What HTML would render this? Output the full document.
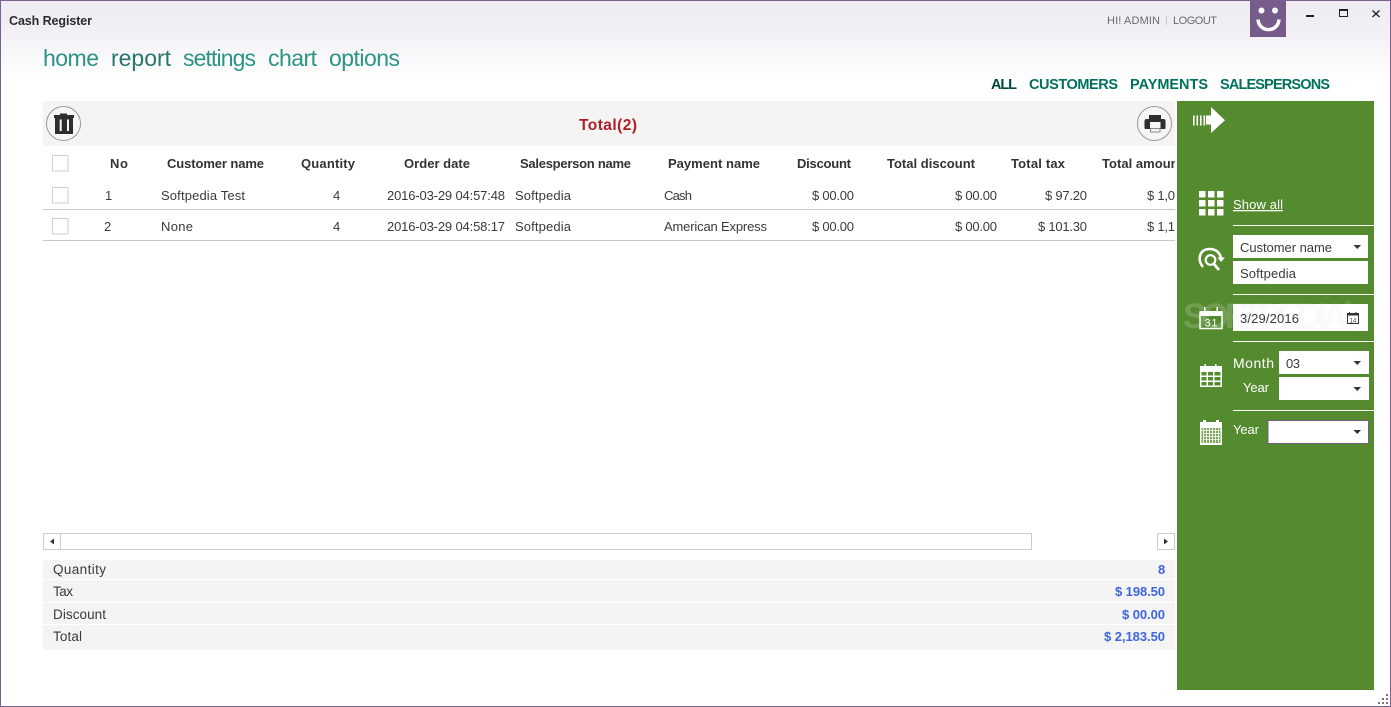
<!DOCTYPE html>
<html><head><meta charset="utf-8"><title>Cash Register</title>
<style>
html,body{margin:0;padding:0;background:#fff;overflow:hidden}
svg{display:block;position:absolute;left:0;top:0}
text{font-family:"Liberation Sans",sans-serif;font-size:13px;fill:#3a3a3a}
.h{font-weight:bold;fill:#333}
.l{font-size:13.5px}
.m{font-size:23px;fill:#2b9483}
.tab{font-size:14.5px;font-weight:bold;fill:#00705f}
.s{font-size:11px;fill:#6a6a6a}
.v{font-weight:bold;fill:#3f66dd}
.w{fill:#fff}
</style></head><body>
<svg width="1391" height="707" viewBox="0 0 1391 707" xmlns="http://www.w3.org/2000/svg">
<defs>
<linearGradient id="g" x1="0" y1="0" x2="0" y2="1"><stop offset="0" stop-color="#eeecf1"/><stop offset=".35" stop-color="#f1eff4"/><stop offset="1" stop-color="#fff"/></linearGradient>
<clipPath id="tc"><rect x="43" y="146" width="1132" height="100"/></clipPath>
<clipPath id="df"><rect x="1233" y="304" width="135" height="27"/></clipPath>
</defs>
<rect width="1391" height="707" fill="#fff"/>
<rect width="1391" height="80" fill="url(#g)"/>

<text x="9" y="25" class="h" style="fill:#2b2b2b;font-size:12.500px" textLength="83">Cash Register</text>
<text x="1107" y="24" class="s" textLength="53">HI! ADMIN</text>
<rect x="1166" y="16" width="1" height="9" fill="#ccc"/>
<text x="1173" y="24" class="s" textLength="44">LOGOUT</text>

<rect x="1250" y="0" width="36" height="37" fill="#775b8a"/>
<circle cx="1261.500" cy="10.500" r="3" fill="#fff"/><circle cx="1275" cy="10.500" r="3" fill="#fff"/>
<path d="M1258 19.500C1259 33 1278 33 1279 19.500" fill="none" stroke="#fff" stroke-width="3.500"/>

<rect x="1306" y="15" width="8" height="2" fill="#222"/>
<rect x="1339.500" y="9.500" width="8" height="7" fill="none" stroke="#222"/><rect x="1339" y="9" width="9" height="2" fill="#222"/>
<path d="M1372.500 10.500L1379.500 17M1379.500 10.500L1372.500 17" stroke="#222" stroke-width="1.300"/>

<text x="43" y="66" class="m" textLength="56">home</text>
<text x="111" y="66" class="m" textLength="60" style="fill:#25786b">report</text>
<text x="183" y="66" class="m" textLength="73">settings</text>
<text x="268" y="66" class="m" textLength="49">chart</text>
<text x="329" y="66" class="m" textLength="71">options</text>

<text x="991" y="89" class="tab" textLength="26" style="fill:#00483c">ALL</text>
<text x="1029" y="89" class="tab" textLength="89">CUSTOMERS</text>
<text x="1130" y="89" class="tab" textLength="78">PAYMENTS</text>
<text x="1220" y="89" class="tab" textLength="110">SALESPERSONS</text>

<rect x="43" y="101" width="1132" height="45" fill="#f4f4f4"/>
<circle cx="63.500" cy="123.500" r="17" fill="#f6f6f6" stroke="#999"/>
<path d="M60 113.500h7v1.500h7v3h-20v-3h6z" fill="#2e2e2e"/>
<path d="M55 118h18v16h-18zM59.700 119.500v11.500h2v-11.500zM67 119.500v11.500h2v-11.500z" fill="#2e2e2e" fill-rule="evenodd"/>
<text x="579" y="130" class="h" style="font-size:15.500px;fill:#b01e26" textLength="58">Total(2)</text>
<circle cx="1154.500" cy="123.500" r="17" fill="#f6f6f6" stroke="#999"/>
<path d="M1149 115h12v4h-12z" fill="#2e2e2e"/>
<path d="M1147 119h16.500q2 0 2 2v7q0 1-1 1h-19q-1 0-1-1v-7q0-2 2.500-2z" fill="#2e2e2e"/>
<rect x="1150" y="122" width="10.500" height="6" fill="#f6f6f6"/>
<rect x="1150.500" y="128.500" width="9.500" height="3.500" fill="#f4f4f4" stroke="#888" stroke-width="1"/>

<g fill="#fff" stroke="#cfcfcf">
<rect x="52.500" y="155.500" width="15.500" height="15.500"/>
<rect x="52.500" y="187.500" width="15.500" height="15.500"/>
<rect x="52.500" y="218.500" width="15.500" height="15.500"/>
</g>

<g clip-path="url(#tc)">
<text x="110" y="168" class="h" textLength="18">No</text>
<text x="167" y="168" class="h" textLength="97">Customer name</text>
<text x="301" y="168" class="h" textLength="54">Quantity</text>
<text x="404" y="168" class="h" textLength="66">Order date</text>
<text x="520" y="168" class="h" textLength="111">Salesperson name</text>
<text x="668" y="168" class="h" textLength="92">Payment name</text>
<text x="797" y="168" class="h" textLength="54">Discount</text>
<text x="887" y="168" class="h" textLength="88">Total discount</text>
<text x="1011" y="168" class="h" textLength="54">Total tax</text>
<text x="1102" y="168" class="h" textLength="81">Total amount</text>

<text x="105" y="200">1</text>
<text x="161" y="200" textLength="84">Softpedia Test</text>
<text x="333" y="200">4</text>
<text x="387" y="200" textLength="118">2016-03-29 04:57:48</text>
<text x="515" y="200" textLength="56">Softpedia</text>
<text x="664" y="200" textLength="28">Cash</text>
<text x="812" y="200" textLength="42">$ 00.00</text>
<text x="955" y="200" textLength="42">$ 00.00</text>
<text x="1045" y="200" textLength="42">$ 97.20</text>
<text x="1147" y="200" textLength="28">$ 1,0</text>

<text x="104" y="231">2</text>
<text x="161" y="231" textLength="32">None</text>
<text x="333" y="231">4</text>
<text x="387" y="231" textLength="118">2016-03-29 04:58:17</text>
<text x="515" y="231" textLength="56">Softpedia</text>
<text x="664" y="231" textLength="103">American Express</text>
<text x="812" y="231" textLength="42">$ 00.00</text>
<text x="955" y="231" textLength="42">$ 00.00</text>
<text x="1038" y="231" textLength="49">$ 101.30</text>
<text x="1147" y="231" textLength="28">$ 1,1</text>
</g>
<rect x="43" y="209" width="1132" height="1" fill="#c8c8c8"/>
<rect x="43" y="240" width="1132" height="1" fill="#c8c8c8"/>

<rect x="43.500" y="533.500" width="988" height="16" fill="#fff" stroke="#ccc"/>
<rect x="60" y="534" width="1" height="15" fill="#ccc"/>
<path d="M50 541.500l4-3v6z" fill="#333"/>
<rect x="1157.500" y="533.500" width="17" height="16" fill="#fff" stroke="#ccc"/>
<path d="M1168 541.500l-4-3v6z" fill="#333"/>

<path d="M47 560H1175V579H43V564q0-4 4-4z" fill="#f4f4f4"/>
<rect x="43" y="580" width="1132" height="22" fill="#f4f4f4"/>
<rect x="43" y="603" width="1132" height="21" fill="#f4f4f4"/>
<path d="M43 625H1175V650H47q-4 0-4-4z" fill="#f4f4f4"/>
<text x="53" y="574" class="l" textLength="53">Quantity</text>
<text x="53" y="596" class="l" textLength="20">Tax</text>
<text x="53" y="619" class="l" textLength="53">Discount</text>
<text x="53" y="641" class="l" textLength="29">Total</text>
<text x="1158" y="574" class="v" textLength="7">8</text>
<text x="1115" y="596" class="v" textLength="50">$ 198.50</text>
<text x="1122" y="619" class="v" textLength="43">$ 00.00</text>
<text x="1104" y="641" class="v" textLength="61">$ 2,183.50</text>

<rect x="1177" y="101" width="197" height="589" fill="#558b2f"/>

<path d="M1193 115.500h1.600v10h-1.600zM1196.500 115.500h1.600v10h-1.600zM1200 115.500h1.600v10h-1.600zM1203.500 115.500h1.600v10h-1.600zM1206 115.500h5v-8.500l14 13.300-14 12.700v-8.500h-5z" fill="#fff"/>

<g fill="#fff">
<rect x="1199" y="191" width="6.500" height="6.500"/><rect x="1208" y="191" width="6.500" height="6.500"/><rect x="1217" y="191" width="6.500" height="6.500"/>
<rect x="1199" y="200" width="6.500" height="6.500"/><rect x="1208" y="200" width="6.500" height="6.500"/><rect x="1217" y="200" width="6.500" height="6.500"/>
<rect x="1199" y="209" width="6.500" height="6.500"/><rect x="1208" y="209" width="6.500" height="6.500"/><rect x="1217" y="209" width="6.500" height="6.500"/>
</g>
<text x="1233" y="209" class="w" textLength="50" text-decoration="underline">Show all</text>
<rect x="1233" y="225" width="141" height="1" fill="#fff"/>

<path d="M1203 267C1197 260 1199 249 1210 249C1216 249 1220 253 1221 258" fill="none" stroke="#fff" stroke-width="2.600"/>
<path d="M1217.500 257.500h7.500l-4 4.500z" fill="#fff"/>
<circle cx="1210.500" cy="260" r="4.800" fill="none" stroke="#fff" stroke-width="2.200"/>
<path d="M1214 264l5 6" stroke="#fff" stroke-width="2.800"/>

<rect x="1233" y="235" width="135" height="23" fill="#fff"/>
<text x="1240" y="252" textLength="92">Customer name</text>
<path d="M1353.500 245h7.500l-3.700 4z" fill="#333"/>
<rect x="1233" y="261" width="135" height="23" fill="#fff"/>
<text x="1240" y="278" textLength="56">Softpedia</text>
<rect x="1233" y="294" width="141" height="1" fill="#fff"/>

<text x="1183" y="328" style="font-size:35px;font-weight:bold;fill:rgba(255,255,255,.17)" textLength="165">SOFTPEDIA</text>
<text x="1345" y="307" style="font-size:8px;fill:rgba(255,255,255,.3)">®</text>

<rect x="1233" y="304" width="135" height="27" fill="#fff"/>
<g clip-path="url(#df)"><text x="1183" y="328" style="font-size:35px;font-weight:bold;fill:rgba(120,120,120,.04)" textLength="165">SOFTPEDIA</text></g>
<text x="1240" y="323" textLength="59">3/29/2016</text>
<path d="M1349.500 312v3M1356 312v3" stroke="#333"/>
<rect x="1347.500" y="313.500" width="11" height="10" fill="none" stroke="#333"/>
<rect x="1347.500" y="313.500" width="11" height="2" fill="#333"/>
<text x="1349.500" y="322.500" style="font-size:6px;fill:#333">14</text>
<rect x="1233" y="341" width="141" height="1" fill="#fff"/>

<rect x="1200" y="312.500" width="22" height="16" fill="none" stroke="#fff" stroke-width="1.500"/>
<rect x="1199.500" y="311" width="23" height="5" fill="#fff"/>
<rect x="1204" y="307" width="1.500" height="6" fill="#fff"/><rect x="1216.500" y="307" width="1.500" height="6" fill="#fff"/>
<text x="1204.500" y="326.500" style="font-size:11px;fill:#fff" textLength="13">31</text>

<text x="1233" y="368" class="w l" style="font-size:14px" textLength="41">Month</text>
<rect x="1279" y="351" width="90" height="23" fill="#fff"/>
<text x="1286" y="368" textLength="14">03</text>
<path d="M1353.500 361h7.500l-3.700 4z" fill="#333"/>
<text x="1243" y="392" class="w" textLength="26">Year</text>
<rect x="1279" y="377" width="90" height="23" fill="#fff"/>
<path d="M1353.500 387h7.500l-3.700 4z" fill="#333"/>
<rect x="1233" y="410" width="141" height="1" fill="#fff"/>

<path d="M1200 366h4.500v-2h1.500v2h9v-2h1.500v2h5.500v21h-22z" fill="#fff"/>
<g fill="#558b2f">
<rect x="1201.500" y="372" width="5" height="3.500"/><rect x="1208" y="372" width="5" height="3.500"/><rect x="1214.500" y="372" width="6" height="3.500"/>
<rect x="1201.500" y="377" width="5" height="3.500"/><rect x="1208" y="377" width="5" height="3.500"/><rect x="1214.500" y="377" width="6" height="3.500"/>
<rect x="1201.500" y="382" width="5" height="3.500"/><rect x="1208" y="382" width="5" height="3.500"/><rect x="1214.500" y="382" width="6" height="3.500"/>
</g>

<text x="1233" y="434" class="w" textLength="26">Year</text>
<rect x="1268" y="420.500" width="100.500" height="23" fill="#fff" stroke="#775b8a"/>
<path d="M1353.500 430h7.500l-3.700 4z" fill="#333"/>

<path d="M1200 422h3v-2h3v2h10v-2h3v2h3v23h-22z" fill="#fff"/>
<rect x="1201.500" y="428" width="19" height="15" fill="#7ea65f"/>
<path d="M1203.500 428v15M1206.500 428v15M1209.500 428v15M1212.500 428v15M1215.500 428v15M1218.500 428v15M1201.500 430.500h19M1203 433.500h17M1203 436.500h17M1203 439.500h17" stroke="#fff" stroke-width=".8" fill="none"/>

<g fill="#777">
<rect x="1386" y="694" width="2" height="2"/>
<rect x="1382" y="698" width="2" height="2"/><rect x="1386" y="698" width="2" height="2"/>
<rect x="1378" y="702" width="2" height="2"/><rect x="1382" y="702" width="2" height="2"/><rect x="1386" y="702" width="2" height="2"/>
</g>

<rect x=".5" y=".5" width="1390" height="706" fill="none" stroke="#7a5f91"/>
</svg>
</body></html>
